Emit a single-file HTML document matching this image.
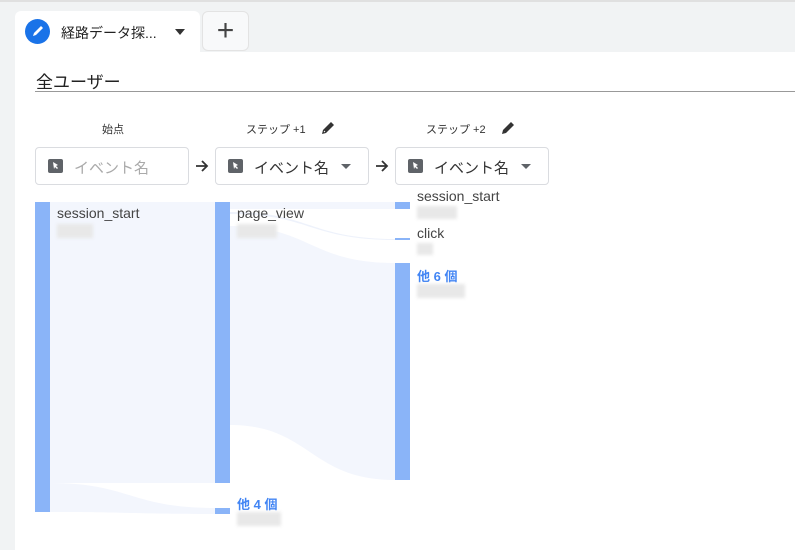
<!DOCTYPE html>
<html><head><meta charset="utf-8"><style>
body{margin:0;width:795px;height:550px;background:#f1f3f4;font-family:"Liberation Sans","Noto Sans CJK JP",sans-serif;position:relative;overflow:hidden}
.abs{position:absolute}
.topline{left:0;top:0;width:795px;height:2px;background:#e0e0e0}
.tab{left:15px;top:11px;width:185px;height:42px;background:#fff;border-radius:6px 6px 0 0}
.plus{left:202px;top:11px;width:47px;height:40px;background:#f8f9fa;border-radius:6px;border:1px solid #e3e3e3;box-sizing:border-box;font-size:30px;color:#444;text-align:center;line-height:38px;font-weight:300}
.content{left:15px;top:52px;width:780px;height:498px;background:#fff}
.hdr{font-size:11px;color:#333;width:154px;top:121px}
.box{height:38px;width:154px;border:1px solid #dadce0;border-radius:4px;box-sizing:border-box;background:#fff;font-size:15px}
.ic{position:absolute;left:12px;top:12px;width:15px;height:13px;background:#5f6368;border-radius:2px}
.bt{position:absolute;left:38px;top:9px}
.dd{position:absolute;right:17px;top:16px;border-left:5px solid transparent;border-right:5px solid transparent;border-top:5px solid #5f6368}
.lbl{font-size:14px;color:#444}
.blur{background:#e8e8e8;filter:blur(1.5px)}
.blue{font-size:13px;color:#4285f4;font-weight:bold}
</style></head><body>
<div class="abs topline"></div>
<div class="abs tab">
 <div class="abs" style="left:10px;top:8px;width:25px;height:25px;border-radius:50%;background:#1a73e8"><svg width="25" height="25" viewBox="0 0 25 25"><path d="M8 17l1-3 7-7 2 2-7 7z" fill="#fff"/></svg></div>
 <div class="abs" style="left:46px;top:12px;font-size:14px;color:#222">経路データ探...</div>
 <div class="abs" style="left:160px;top:18px;border-left:5px solid transparent;border-right:5px solid transparent;border-top:6px solid #333"></div>
</div>
<div class="abs plus">+</div>
<div class="abs content"></div>
<div class="abs" style="left:36px;top:68px;font-size:17px;color:#222">全ユーザー</div>
<div class="abs" style="left:35px;top:91px;width:760px;height:1px;background:#999"></div>

<div class="abs hdr" style="left:102px">始点</div>
<div class="abs hdr" style="left:246px">ステップ +1</div>
<div class="abs hdr" style="left:426px">ステップ +2</div>
<svg class="abs" style="left:320px;top:120px" width="16" height="16" viewBox="0 0 16 16"><path d="M2 14l1-4 8-8 3 3-8 8z" fill="#333"/><path d="M4 11l1 1" stroke="#fff"/></svg>
<svg class="abs" style="left:500px;top:120px" width="16" height="16" viewBox="0 0 16 16"><path d="M2 14l1-4 8-8 3 3-8 8z" fill="#333"/></svg>

<svg class="abs" style="left:0;top:0" width="795" height="550">
 <g fill="#5f6368"><rect x="48" y="160" width="15" height="13" rx="2"/><rect x="228" y="160" width="15" height="13" rx="2"/><rect x="408" y="160" width="15" height="13" rx="2"/></g>
 <g fill="#fff"><path d="M53 163l5 3-2 1 2 2-1 1-2-2-1 2z"/><path d="M233 163l5 3-2 1 2 2-1 1-2-2-1 2z"/><path d="M413 163l5 3-2 1 2 2-1 1-2-2-1 2z"/></g>
 <g stroke="#333" stroke-width="1.8" fill="none"><path d="M196 166h11M202 161l5 5-5 5"/><path d="M376 166h11M382 161l5 5-5 5"/></g>
</svg>
<div class="abs box" style="left:35px;top:147px"><div class="bt" style="color:#aaa">イベント名</div></div>
<div class="abs box" style="left:215px;top:147px"><div class="bt" style="color:#333">イベント名</div><div class="dd"></div></div>
<div class="abs box" style="left:395px;top:147px"><div class="bt" style="color:#333">イベント名</div><div class="dd"></div></div>
<svg class="abs" style="left:0;top:0" width="795" height="550">
 <g fill="#5f6368"><rect x="48" y="159" width="15" height="14" rx="2"/><rect x="228" y="159" width="15" height="14" rx="2"/><rect x="408" y="159" width="15" height="14" rx="2"/></g>
 <g fill="#fff"><path d="M53 162l5 3-2 1 2 2-1 1-2-2-1 2z"/><path d="M233 162l5 3-2 1 2 2-1 1-2-2-1 2z"/><path d="M413 162l5 3-2 1 2 2-1 1-2-2-1 2z"/></g>
</svg>

<svg class="abs" style="left:0;top:0" width="795" height="550">
 <rect x="50" y="202" width="165" height="281" fill="#f3f6fd"/>
 <path d="M50 483 C130 483 130 508 215 508 L215 514 C130 514 130 512 50 512Z" fill="#f3f6fd"/>
 <path d="M230 202 L395 202 L395 209 L230 209Z" fill="#f3f6fd"/>
 <path d="M230 226 C310 226 310 263 395 263 L395 480 C310 480 310 425 230 425Z" fill="#f3f6fd"/>
 <path d="M230 212 C310 212 310 239 395 239 L395 240 C310 240 310 214 230 214Z" fill="#eef2fb"/>
 <rect x="35" y="202" width="15" height="310" fill="#8ab4f8"/>
 <rect x="215" y="202" width="15" height="281" fill="#8ab4f8"/>
 <rect x="215" y="508" width="15" height="6" fill="#8ab4f8"/>
 <rect x="395" y="202" width="15" height="7" fill="#8ab4f8"/>
 <rect x="395" y="238" width="15" height="2" fill="#8ab4f8"/>
 <rect x="395" y="263" width="15" height="217" fill="#8ab4f8"/>
</svg>
<div class="abs lbl" style="left:57px;top:205px">session_start</div>
<div class="abs blur" style="left:57px;top:224px;width:36px;height:14px"></div>
<div class="abs lbl" style="left:237px;top:205px">page_view</div>
<div class="abs blur" style="left:237px;top:224px;width:40px;height:14px"></div>
<div class="abs lbl" style="left:417px;top:188px">session_start</div>
<div class="abs blur" style="left:417px;top:206px;width:40px;height:13px"></div>
<div class="abs lbl" style="left:417px;top:225px">click</div>
<div class="abs blur" style="left:417px;top:243px;width:16px;height:12px"></div>
<div class="abs blue" style="left:417px;top:266px">他 6 個</div>
<div class="abs blur" style="left:417px;top:284px;width:48px;height:14px"></div>
<div class="abs blue" style="left:237px;top:494px">他 4 個</div>
<div class="abs blur" style="left:237px;top:512px;width:44px;height:14px"></div>
</body></html>
